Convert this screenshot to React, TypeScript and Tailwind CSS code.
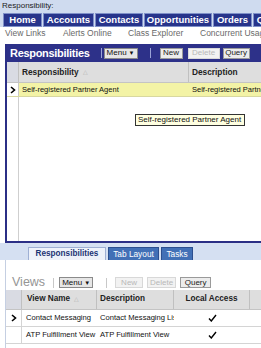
import React from "react";

const topTabs = [
  { label: "Home", w: "w-[39px]" },
  { label: "Accounts", w: "w-[51px]" },
  { label: "Contacts", w: "w-[48px]" },
  { label: "Opportunities", w: "w-[68px]" },
  { label: "Orders", w: "w-[39px]" },
  { label: "Quotes", w: "w-[40px]" },
];

function Chevron() {
  return (
    <svg width="6" height="8" viewBox="0 0 6 8" className="shrink-0">
      <polyline points="1,1 4.5,4 1,7" fill="none" stroke="#000" strokeWidth="1.6" />
    </svg>
  );
}

function Check() {
  return (
    <svg width="9" height="8" viewBox="0 0 9 8">
      <polyline points="1,4.5 3.3,7 8,1" fill="none" stroke="#000" strokeWidth="1.4" />
    </svg>
  );
}

function Btn({ label, disabled, w }: { label: string; disabled?: boolean; w: string }) {
  return (
    <div
      className={`${w} shrink-0 h-[11px] flex items-center justify-center text-[8px] leading-none border ${
        disabled
          ? "bg-[#f2f2f2] border-[#d8d8d8] text-[#b8b8b8]"
          : "bg-[#ececec] border-[#9a9a9a] text-[#222]"
      }`}
    >
      {label}
    </div>
  );
}

function MenuBtn() {
  return (
    <div className="w-[34px] shrink-0 h-[11px] flex items-center justify-center gap-[2px] text-[8px] leading-none bg-[#e6e6e6] border border-[#8a8a8a] text-[#111]">
      Menu
      <span className="text-[6px]">▼</span>
    </div>
  );
}

export default function App() {
  return (
    <div className="relative w-[261px] h-[348px] overflow-hidden bg-white font-['Liberation_Sans',Arial,sans-serif]">
      {/* title strip */}
      <div className="h-[13px] bg-[#cfdbef] pl-[2px] text-[8px] leading-[11px] text-[#222]">
        Responsibility:
      </div>

      {/* screen tabs */}
      <div className="h-[14px] bg-[#cfdbef] flex gap-[1px] pl-[3px] overflow-hidden">
        {topTabs.map((t) => (
          <div
            key={t.label}
            className={`${t.w} shrink-0 h-[14px] bg-[#27348b] border border-[#7f90c8] flex items-center justify-center text-white font-bold text-[9.5px] leading-none`}
          >
            {t.label}
          </div>
        ))}
      </div>

      {/* link bar */}
      <div className="h-[13px] flex items-center text-[8.5px] text-[#6a6a6a] whitespace-nowrap overflow-hidden">
        <span className="ml-[5px] w-[58px] shrink-0">View Links</span>
        <span className="w-[65px] shrink-0">Alerts Online</span>
        <span className="w-[72px] shrink-0">Class Explorer</span>
        <span className="shrink-0">Concurrent Usage</span>
      </div>

      <div className="h-[4px]" />

      {/* responsibilities applet */}
      <div className="ml-[5px] h-[199px] border-l-2 border-b-2 border-[#2b2f86] flex flex-col overflow-hidden">
        <div className="h-[18px] bg-[#2d3189] flex items-center whitespace-nowrap overflow-hidden">
          <span className="ml-[3px] shrink-0 text-white font-bold text-[11px] tracking-[-0.3px] leading-none">
            Responsibilities
          </span>
          <span className="ml-[11px] shrink-0 w-[1px] h-[10px] bg-[#9aa2d6]" />
          <div className="ml-[2px]">
            <MenuBtn />
          </div>
          <span className="ml-[12px] shrink-0 w-[1px] h-[10px] bg-[#9aa2d6]" />
          <div className="ml-[9px] flex">
            <Btn label="New" w="w-[23px]" />
            <div className="ml-[5px]">
              <Btn label="Delete" w="w-[32px]" disabled />
            </div>
            <div className="ml-[3px]">
              <Btn label="Query" w="w-[27px]" />
            </div>
          </div>
        </div>

        <div className="h-[21px] bg-[#dedede] flex border-b border-[#c4c4c4] text-[8.3px] font-bold text-[#222] whitespace-nowrap">
          <div className="w-[12px] shrink-0 bg-[#d9dbe3] border-r border-[#c0c0c0]" />
          <div className="w-[170px] shrink-0 flex items-center pl-[3px] gap-[4px] border-r border-[#c0c0c0]">
            Responsibility
            <span className="text-[6px] text-[#b0b0b0] font-normal">△</span>
          </div>
          <div className="flex items-center pl-[3px]">Description</div>
        </div>

        <div className="h-[14px] flex bg-[#f3f3a6] text-[7.5px] text-[#111] whitespace-nowrap overflow-hidden border-b border-[#d8d8a0]">
          <div className="w-[12px] shrink-0 bg-white flex items-center justify-center border-r border-[#c8c8c8]">
            <Chevron />
          </div>
          <div className="w-[170px] shrink-0 flex items-center pl-[3px]">
            Self-registered Partner Agent
          </div>
          <div className="flex items-center pl-[3px]">Self-registered Partner Agent</div>
        </div>

        <div className="flex-1 flex">
          <div className="w-[12px] shrink-0 border-r border-[#cfcfcf]" />
        </div>
      </div>

      {/* view tabs */}
      <div className="h-[17px] bg-[#d5e0f2] flex items-end pl-[28px] gap-[2px]">
        <div className="w-[78px] h-[13px] bg-[#eef2fa] border border-b-0 border-[#9fb0d4] flex items-center justify-center text-[8.2px] font-bold text-[#1d3575] leading-none">
          Responsibilities
        </div>
        <div className="w-[51px] h-[13px] bg-[#4270b6] border border-b-0 border-[#2c4f8f] flex items-center justify-center text-[8.3px] text-white leading-none">
          Tab Layout
        </div>
        <div className="w-[32px] h-[13px] bg-[#4270b6] border border-b-0 border-[#2c4f8f] flex items-center justify-center text-[8.3px] text-white leading-none">
          Tasks
        </div>
      </div>

      {/* views applet */}
      <div className="ml-[5px] h-[88px] border-l border-[#c5cfe2] flex flex-col overflow-hidden">
        <div className="h-[16px]" />
        <div className="h-[13px] flex items-center whitespace-nowrap">
          <span className="ml-[6px] text-[12.5px] text-[#959595] leading-none">Views</span>
          <span className="ml-[8px] w-[1px] h-[10px] bg-[#c8c8c8]" />
          <div className="ml-[5px]">
            <MenuBtn />
          </div>
          <span className="ml-[13px] w-[1px] h-[10px] bg-[#c8c8c8]" />
          <div className="ml-[8px] flex gap-[4px]">
            <Btn label="New" w="w-[28px]" disabled />
            <Btn label="Delete" w="w-[29px]" disabled />
            <Btn label="Query" w="w-[31px]" />
          </div>
        </div>

        <div className="h-[20px] mt-[1px] bg-[#dedede] flex text-[8.2px] font-bold text-[#222] whitespace-nowrap border-b border-[#c4c4c4]">
          <div className="w-[16px] shrink-0 bg-[#d9dbe3] border-r border-[#c0c0c0]" />
          <div className="w-[75px] shrink-0 flex items-center pl-[5px] gap-[4px] border-r border-[#c0c0c0]">
            View Name
            <span className="text-[6px] text-[#b0b0b0] font-normal">△</span>
          </div>
          <div className="w-[77px] shrink-0 flex items-center pl-[3px] border-r border-[#c0c0c0]">
            Description
          </div>
          <div className="w-[76px] shrink-0 flex items-center justify-center border-r border-[#c0c0c0]">
            Local Access
          </div>
          <div className="flex-1" />
        </div>

        {[
          { name: "Contact Messaging", desc: "Contact Messaging Lists", sel: true },
          { name: "ATP Fulfillment View", desc: "ATP Fulfillment View", sel: false },
        ].map((r) => (
          <div
            key={r.name}
            className="h-[17px] flex text-[7.6px] text-[#111] whitespace-nowrap border-b border-[#d4d4d4]"
          >
            <div className="w-[16px] shrink-0 flex items-center justify-center border-r border-[#d4d4d4]">
              {r.sel && <Chevron />}
            </div>
            <div className="w-[75px] shrink-0 flex items-center pl-[4px] overflow-hidden">{r.name}</div>
            <div className="w-[77px] shrink-0 flex items-center pl-[3px] overflow-hidden">{r.desc}</div>
            <div className="w-[76px] shrink-0 flex items-center justify-center">
              <Check />
            </div>
          </div>
        ))}
      </div>

      {/* tooltip */}
      <div className="absolute left-[135px] top-[114px] w-[110px] h-[12px] bg-[#ffffe1] border border-[#333] flex items-center pl-[2px] text-[8px] text-[#111] whitespace-nowrap leading-none">
        Self-registered Partner Agent
      </div>
    </div>
  );
}
